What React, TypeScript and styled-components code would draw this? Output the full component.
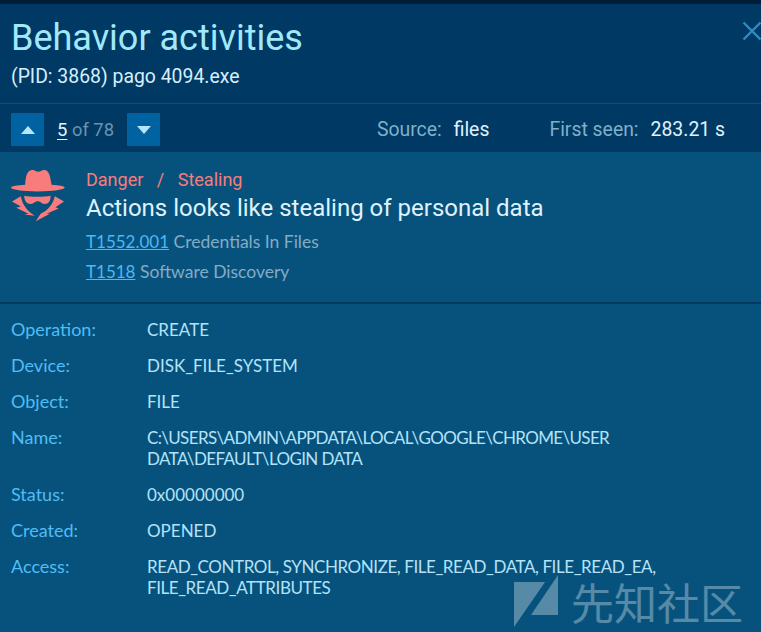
import styled, { createGlobalStyle } from 'styled-components'

const GlobalStyle = createGlobalStyle`
	html, body {
		margin: 0;
		padding: 0;
		background: #07527d;
	}
`;

const rows = [
	{ label: 'Operation:', value: 'CREATE', tracking: 0 },
	{ label: 'Device:', value: 'DISK_FILE_SYSTEM', tracking: 0 },
	{ label: 'Object:', value: 'FILE', tracking: 0 },
	{ label: 'Name:', value: 'C:\\USERS\\ADMIN\\APPDATA\\LOCAL\\GOOGLE\\CHROME\\USER DATA\\DEFAULT\\LOGIN DATA', tracking: -0.62 },
	{ label: 'Status:', value: '0x00000000', tracking: 0 },
	{ label: 'Created:', value: 'OPENED', tracking: 0 },
	{ label: 'Access:', value: 'READ_CONTROL, SYNCHRONIZE, FILE_READ_DATA, FILE_READ_EA, FILE_READ_ATTRIBUTES', tracking: -0.42 },
]

export default function App() {
	return (
		<Page>
			<GlobalStyle />
			<TopStrip />
			<Header>
				<Title>Behavior activities</Title>
				<Subtitle>(PID: 3868) pago 4094.exe</Subtitle>
				<CloseIcon viewBox="0 0 20 20">
					<path d="M1.5 1.5 L18.5 18.5 M18.5 1.5 L1.5 18.5" />
				</CloseIcon>
			</Header>
			<Toolbar>
				<Pager>
					<ArrowButton><Triangle viewBox="0 0 14 8"><path d="M7 0 L14 8 L0 8 Z" /></Triangle></ArrowButton>
					<Counter><b>5</b> of 78</Counter>
					<ArrowButton><Triangle viewBox="0 0 14 8"><path d="M0 0 L14 0 L7 8 Z" /></Triangle></ArrowButton>
				</Pager>
				<Meta>
					<MetaItem>Source:<strong>files</strong></MetaItem>
					<MetaItem>First seen:<strong>283.21 s</strong></MetaItem>
				</Meta>
			</Toolbar>
			<Summary>
				<SpyIcon viewBox="32 17 164 164">
					<path d="M75 62 C76 40 80 18 95 17 C102 16 108 22 115 22 C122 22 128 16 135 17 C148 18 152 40 155 62 C178 64 195 66 195 70 C195 76 160 82 113 82 C66 82 32 76 32 70 C32 66 52 64 75 62 Z" />
					<path d="M72 95 C92 99 132 99 152 95 C153 110 146 120 134 120 C124 120 122 112 113 112 C104 112 102 120 92 120 C80 120 72 110 72 95 Z" />
					<path d="M62 97 L35 113 L62 128 L48 132 L85 150 L72 152 L104 156 C84 144 66 124 62 97 Z" />
					<path d="M165 97 L193 113 L167 130 L177 134 L140 150 L150 150 L107 173 L122 150 C145 140 160 120 165 97 Z" />
				</SpyIcon>
				<SummaryBody>
					<Category><span>Danger</span><i>/</i><span>Stealing</span></Category>
					<Headline>Actions looks like stealing of personal data</Headline>
					<Technique><a href="#t1">T1552.001</a> Credentials In Files</Technique>
					<Technique><a href="#t2">T1518</a> Software Discovery</Technique>
				</SummaryBody>
			</Summary>
			<Details>
				{rows.map((row) => (
					<DetailRow key={row.label}>
						<DetailLabel>{row.label}</DetailLabel>
						<DetailValue $tracking={row.tracking}>{row.value}</DetailValue>
					</DetailRow>
				))}
			</Details>
			<Watermark>
				<svg width="44" height="52" viewBox="0 0 44 52">
					<path d="M0 7 H31 L0 52 Z" />
					<path d="M44 0 V40 H17 Z" />
				</svg>
				<span>先知社区</span>
			</Watermark>
		</Page>
	)
}

const Page = styled.div`
	position: relative;
	width: 761px;
	height: 632px;
	overflow: hidden;
	background: #07527d;
	font-family: Roboto, sans-serif;
`;

const TopStrip = styled.div`
	height: 4px;
	background: #001e38;
`;

const Header = styled.header`
	position: relative;
	height: 100px;
	padding: 14px 11px 0;
	box-sizing: border-box;
	background: #003964;
	border-bottom: 1px solid #0b5179;
`;

const Title = styled.h1`
	margin: 0;
	font-size: 36px;
	line-height: 40px;
	font-weight: 400;
	color: #a0e9fb;
`;

const Subtitle = styled.div`
	margin-top: 8px;
	font-size: 19.4px;
	line-height: 22px;
	color: #d7eefb;
`;

const CloseIcon = styled.svg`
	position: absolute;
	top: 17px;
	right: -1px;
	width: 20px;
	height: 20px;
	fill: none;
	stroke: #2f8bc2;
	stroke-width: 2.4;
`;

const Toolbar = styled.div`
	display: flex;
	align-items: center;
	justify-content: space-between;
	height: 48px;
	padding: 9px 36px 6px 11px;
	box-sizing: border-box;
	background: #003964;
`;

const Pager = styled.div`
	display: flex;
	align-items: center;
`;

const ArrowButton = styled.div`
	display: flex;
	align-items: center;
	justify-content: center;
	width: 33px;
	height: 33px;
	border-radius: 1px;
	background: #0062a0;
`;

const Triangle = styled.svg`
	width: 14px;
	height: 8px;
	fill: #b5e6fb;
`;

const Counter = styled.div`
	width: 83px;
	padding-left: 13px;
	box-sizing: border-box;
	font-size: 18.4px;
	color: #6a93ae;

	b {
		font-weight: 400;
		color: #e3f3fc;
		text-decoration: underline;
		text-underline-offset: 3px;
	}
`;

const Meta = styled.div`
	display: flex;
	gap: 60px;
`;

const MetaItem = styled.div`
	font-size: 19.4px;
	color: #7fb0c8;

	strong {
		margin-left: 12px;
		font-weight: 400;
		color: #e0f2fc;
	}
`;

const Summary = styled.section`
	display: flex;
	height: 152px;
	padding: 17px 11px 0;
	box-sizing: border-box;
	border-bottom: 2px solid #013a60;
`;

const SpyIcon = styled.svg`
	flex: none;
	width: 54px;
	height: 54px;
	margin-top: 1px;
	fill: #f87c7c;
`;

const SummaryBody = styled.div`
	margin-left: 21px;
`;

const Category = styled.div`
	display: flex;
	font-size: 18px;
	line-height: 22px;
	color: #f87c7c;

	i {
		margin: 0 13.5px;
		font-style: normal;
	}
`;

const Headline = styled.div`
	margin-top: 2px;
	font-size: 24px;
	line-height: 30px;
	color: #dff2fc;
`;

const Technique = styled.div`
	margin-top: 8px;
	font-family: "Lato", sans-serif;
	font-size: 17.5px;
	line-height: 22px;
	color: #83acc4;

	a {
		font-size: 17px;
		color: #4ab8f5;
	}
`;

const Details = styled.div`
	display: flex;
	flex-direction: column;
	gap: 15px;
	padding: 15px 11px 0;
`;

const DetailRow = styled.div`
	display: grid;
	grid-template-columns: 136px 520px;
`;

const DetailLabel = styled.div`
	font-family: "Lato", sans-serif;
	font-size: 18px;
	line-height: 21px;
	color: #4fbdf5;
`;

const DetailValue = styled.div<{ $tracking: number }>`
	font-family: "Lato", sans-serif;
	font-size: 17px;
	line-height: 21px;
	letter-spacing: ${(p) => p.$tracking}px;
	color: #b3e3f9;
`;

const Watermark = styled.div`
	position: absolute;
	left: 514px;
	top: 575px;
	display: flex;
	align-items: center;
	gap: 13px;
	opacity: 0.32;
	color: #fff;
	fill: #fff;
	font-family: "Noto Sans CJK SC", sans-serif;
	font-size: 43px;
	line-height: 52px;
`;
